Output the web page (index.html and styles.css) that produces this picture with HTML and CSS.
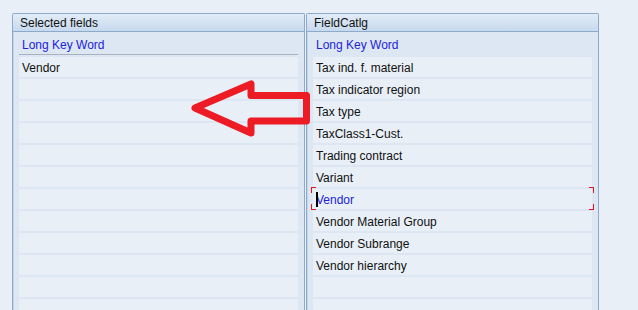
FILE: index.html
```html
<!DOCTYPE html>
<html lang="en">
<head>
    <meta charset="UTF-8">
    <title>Field selection</title>
    <link rel="stylesheet" href="styles.css">
</head>
<body>
    <div class="screen">
        <div class="panel">
            <div class="panel-title">Selected fields</div>
            <div class="col-head active">Long Key Word</div>
            <div class="rows">
                <div class="row">Vendor</div>
                <div class="row"></div>
                <div class="row"></div>
                <div class="row"></div>
                <div class="row"></div>
                <div class="row"></div>
                <div class="row"></div>
                <div class="row"></div>
                <div class="row"></div>
                <div class="row"></div>
                <div class="row"></div>
                <div class="row"></div>
            </div>
        </div>

        <div class="panel">
            <div class="panel-title">FieldCatlg</div>
            <div class="col-head">Long Key Word</div>
            <div class="rows">
                <div class="row">Tax ind. f. material</div>
                <div class="row">Tax indicator region</div>
                <div class="row">Tax type</div>
                <div class="row">TaxClass1-Cust.</div>
                <div class="row">Trading contract</div>
                <div class="row">Variant</div>
                <div class="row selected"><span class="cursor"></span>Vendor</div>
                <div class="row">Vendor Material Group</div>
                <div class="row">Vendor Subrange</div>
                <div class="row">Vendor hierarchy</div>
                <div class="row"></div>
                <div class="row"></div>
            </div>
        </div>
    </div>

    <!-- red arrow drawn over the list -->
    <svg class="arrow" width="638" height="310" viewBox="0 0 638 310">
        <polygon points="195,108 251,84 251,95.5 306.5,95.5 306.5,121 251,121 251,133"
                 fill="none" stroke="#ed1c24" stroke-width="7" stroke-linejoin="round"/>
    </svg>
</body>
</html>
```

FILE: styles.css
```css
body {
    margin: 0;
    background: #e9eff7;
    font-family: "Liberation Sans", Arial, sans-serif;
    font-size: 12px;
    color: #111;
    overflow: hidden;
}
.screen {
    display: flex;
    gap: 1px;
    padding: 13px 0 0 12px;
    height: 297px;
}
.panel {
    width: 291px;
    border: 1px solid #8eaacb;
    border-bottom: none;
    border-radius: 2px 2px 0 0;
    background: #dce7f3;
    box-shadow: inset 1px 0 #c3d5ea;
}
.panel-title {
    height: 17px;
    line-height: 18px;
    padding-left: 7px;
    border-bottom: 1px solid #8eaacb;
    background: linear-gradient(to bottom, #e2ecf7, #c7d9ee);
    color: #111;
}
.col-head {
    margin: 0 6px;
    height: 22px;
    line-height: 27px;
    padding-left: 3px;
    color: #2222dd;
    border-bottom: 1px solid transparent;
}
.col-head.active {
    border-bottom-color: #a7b1bf;
}
.rows {
    display: flex;
    flex-direction: column;
    gap: 2px;
    margin: 2px 6px 0;
}
.row {
    position: relative;
    height: 20px;
    line-height: 22px;
    padding-left: 3px;
    background: #e8eff7;
    white-space: nowrap;
}
.row.selected {
    color: #2222dd;
}
/* red corner marks round the focused cell */
.row.selected::after {
    content: "";
    position: absolute;
    top: -2px;
    bottom: -1px;
    left: -2px;
    right: -2px;
    background:
        linear-gradient(#e8101a, #e8101a) left top / 5px 1px no-repeat,
        linear-gradient(#e8101a, #e8101a) left top / 1px 6px no-repeat,
        linear-gradient(#e8101a, #e8101a) right top / 5px 1px no-repeat,
        linear-gradient(#e8101a, #e8101a) right top / 1px 6px no-repeat,
        linear-gradient(#e8101a, #e8101a) left bottom / 5px 1px no-repeat,
        linear-gradient(#e8101a, #e8101a) left bottom / 1px 6px no-repeat,
        linear-gradient(#e8101a, #e8101a) right bottom / 5px 1px no-repeat,
        linear-gradient(#e8101a, #e8101a) right bottom / 1px 6px no-repeat;
}
.cursor {
    position: absolute;
    left: 3px;
    top: 3px;
    width: 2px;
    height: 15px;
    background: #000;
}
.arrow {
    position: absolute;
    left: 0;
    top: 0;
    pointer-events: none;
}
```
